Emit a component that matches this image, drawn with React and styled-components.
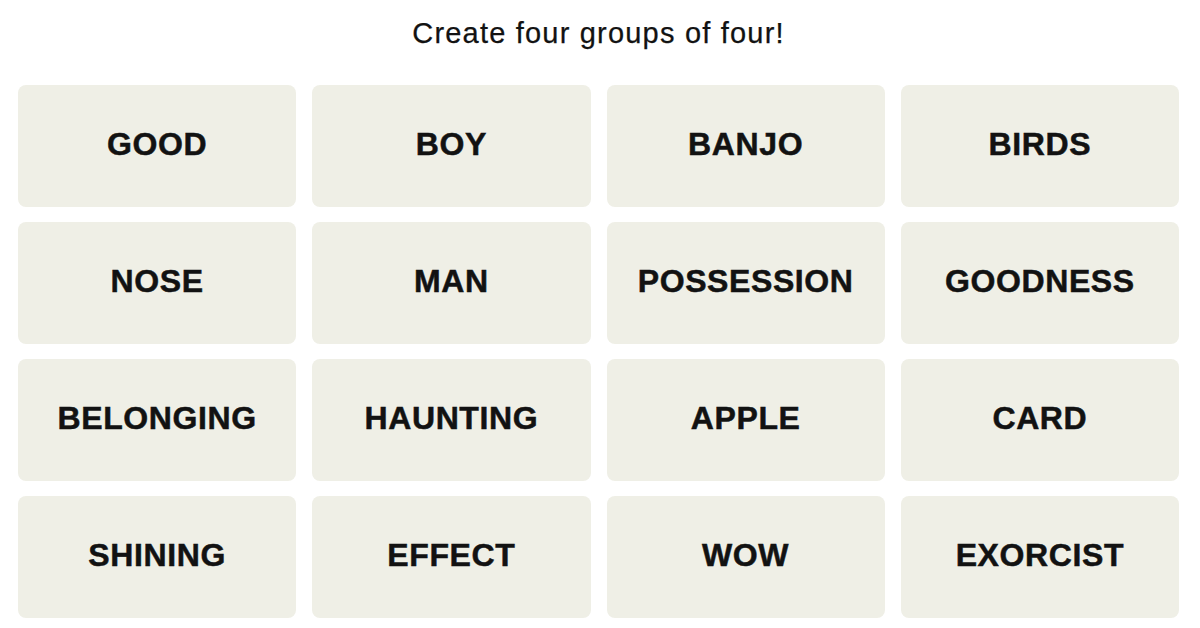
import React from "react";
import styled, { createGlobalStyle } from "styled-components";

const GlobalStyle = createGlobalStyle`
  html, body {
    margin: 0;
    padding: 0;
    background: #ffffff;
  }
  body {
    font-family: "Liberation Sans", Arial, sans-serif;
    color: #121212;
  }
`;

const Page = styled.div`
  width: 1200px;
  height: 628px;
  padding: 13px 21px 0 18px;
  box-sizing: border-box;
  display: flex;
  flex-direction: column;
  align-items: stretch;
`;

const Title = styled.h2`
  margin: 0;
  height: 40px;
  line-height: 40px;
  text-align: center;
  font-size: 29px;
  font-weight: 400;
  letter-spacing: 1.2px;
  color: #121212;
  -webkit-text-stroke: 0.25px #121212;
`;

const Board = styled.div`
  margin-top: 32px;
  display: grid;
  grid-template-columns: repeat(4, 1fr);
  grid-auto-rows: 122px;
  column-gap: 16px;
  row-gap: 15px;
`;

const Tile = styled.button`
  border: none;
  border-radius: 8px;
  background: #efefe6;
  display: flex;
  align-items: center;
  justify-content: center;
  font-family: "Liberation Sans", Arial, sans-serif;
  font-size: 32px;
  font-weight: 700;
  letter-spacing: 0.6px;
  text-transform: uppercase;
  color: #121212;
  -webkit-text-stroke: 0.5px #121212;
  cursor: pointer;
  padding: 0 0 4px;
`;

const words = [
  "GOOD", "BOY", "BANJO", "BIRDS",
  "NOSE", "MAN", "POSSESSION", "GOODNESS",
  "BELONGING", "HAUNTING", "APPLE", "CARD",
  "SHINING", "EFFECT", "WOW", "EXORCIST",
];

export default function App() {
  return (
    <>
      <GlobalStyle />
      <Page>
        <Title>Create four groups of four!</Title>
        <Board>
          {words.map((w) => (
            <Tile key={w}>{w}</Tile>
          ))}
        </Board>
      </Page>
    </>
  );
}
